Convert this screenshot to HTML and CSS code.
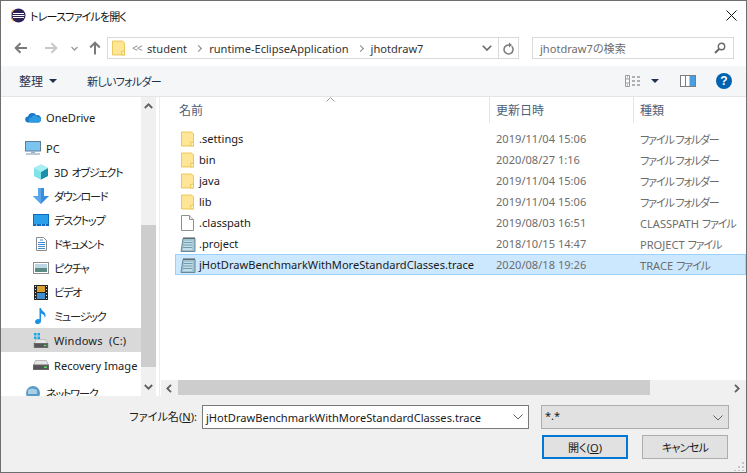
FILE: index.html
```html
<!DOCTYPE html>
<html lang="ja">
<head>
  <meta charset="UTF-8" />
  <title>トレースファイルを開く</title>
  <link rel="stylesheet" href="styles.css">
</head>
<body>
  <svg class="defs" width="0" height="0">
    <symbol id="folder" viewBox="0 0 14 16">
      <path d="M.5.5h11l2 2v13H.5z" fill="#ffe696" stroke="#e8c34f"/>
      <path d="M10.5 15.5v-4h3v4z" fill="#fff3c4" stroke="#e8c34f"/>
    </symbol>
    <symbol id="notepad" viewBox="0 0 16 16">
      <path d="M3 2.500h12v13H1z" fill="#9cc4d4" stroke="#6a8894"/>
      <path d="M4 5h9l-1 9H3z" fill="#c4dde6"/>
      <path d="M3.500 6.500h9M3.200 9h9M3 11.500h9" stroke="#6f9db0"/>
      <path d="M4 1v2M6 1v2M8 1v2M10 1v2M12 1v2M14 1v2" stroke="#555"/>
    </symbol>
    <symbol id="drive" viewBox="0 0 16 10">
      <path d="M2.500 .5h11l2 5H.5z" fill="#e6e6e6" stroke="#b9b9b9"/>
      <rect x=".5" y="5" width="15" height="4.500" fill="#555" stroke="#666"/>
      <rect x="11" y="6.500" width="3" height="1.500" fill="#5fd65f"/>
    </symbol>
  </svg>

  <div class="dialog">
    <!-- Title bar -->
    <div class="titlebar">
      <svg class="app-icon" width="15" height="15" viewBox="0 0 15 15">
        <circle cx="7.500" cy="7.500" r="7" fill="#2c2255"/>
        <path d="M4 .9A7 7 0 0 0 4 14.100 8 8 0 0 1 4 .9z" fill="#f7941e"/>
        <path d="M2 5.500h11M1.500 7.500h12M2 9.500h11" stroke="#fff" stroke-width="1"/>
      </svg>
      <span class="title">トレースファイルを開く</span>
      <svg class="close" width="11" height="11" viewBox="0 0 11 11">
        <path d="M.5.5l10 10M10.500.5l-10 10" stroke="#111" fill="none"/>
      </svg>
    </div>

    <!-- Back / forward and address -->
    <div class="navbar">
      <div class="nav-buttons">
        <svg width="14" height="12" viewBox="0 0 14 12"><path d="M13 6H2M6.500 1.200L1.700 6l4.800 4.800" stroke="#7a7a7a" stroke-width="2" fill="none"/></svg>
        <svg class="nav-fwd" width="14" height="12" viewBox="0 0 14 12"><path d="M1 6h11M7.500 1.200L12.300 6l-4.800 4.800" stroke="#c8c8c8" stroke-width="2" fill="none"/></svg>
        <svg class="nav-down" width="7" height="5" viewBox="0 0 7 5"><path d="M.5 1l3 3 3-3" stroke="#9a9a9a" stroke-width="1.300" fill="none"/></svg>
        <svg class="nav-up" width="12" height="14" viewBox="0 0 12 14"><path d="M6 13.500V2M1.200 6.500L6 1.700l4.800 4.800" stroke="#7a7a7a" stroke-width="2" fill="none"/></svg>
      </div>
      <div class="address">
        <svg class="address-folder" width="13" height="16"><use href="#folder"/></svg>
        <span class="crumb-more">&lt;&lt;</span>
        <span class="crumb">student</span>
        <span class="crumb-sep"></span>
        <span class="crumb">runtime-EclipseApplication</span>
        <span class="crumb-sep"></span>
        <span class="crumb">jhotdraw7</span>
        <svg class="address-drop" width="10" height="6" viewBox="0 0 10 6"><path d="M.8.8L5 5l4.200-4.200" stroke="#666" stroke-width="1.600" fill="none"/></svg>
        <div class="refresh">
          <svg width="11" height="13" viewBox="0 0 11 13"><path d="M8.700 4.300A4.500 4.500 0 1 1 5.500 3H7" stroke="#7a7a7a" stroke-width="1.500" fill="none"/><path d="M6 .4l3 2.600-3 2.600z" fill="#7a7a7a"/></svg>
        </div>
      </div>
      <div class="search">
        <span>jhotdraw7の検索</span>
        <svg width="12" height="12" viewBox="0 0 12 12"><circle cx="7.500" cy="4.500" r="3.200" stroke="#666" stroke-width="1.400" fill="none"/><path d="M5 7L1 11" stroke="#666" stroke-width="2"/></svg>
      </div>
    </div>

    <!-- Command bar -->
    <div class="toolbar">
      <span class="tool">整理<i class="caret"></i></span>
      <span class="tool tool-new">新しいフォルダー</span>
      <div class="toolbar-right">
        <svg class="view-icon" width="16" height="12" viewBox="0 0 16 12">
          <path d="M.5.5h4v11h-4zM.5 4h4M.5 8h4" stroke="#9a9a9a" fill="#fff"/>
          <path d="M2 2h1" stroke="#3f7fbf"/><path d="M2 10h1" stroke="#d04a3c"/>
          <path d="M7 2h3M12 2h3M7 6h3M12 6h3M7 10h3M12 10h3" stroke="#6d6d6d"/>
        </svg>
        <i class="caret caret-view"></i>
        <svg class="pane-icon" width="16" height="12" viewBox="0 0 16 12">
          <rect x=".5" y=".5" width="15" height="11" fill="#fff" stroke="#7d7d7d"/>
          <path d="M5.500 1v10" stroke="#7d7d7d"/>
          <rect x="9.500" y="1" width="5.500" height="10" fill="#4a9ee0"/>
        </svg>
        <span class="help">?</span>
      </div>
    </div>

    <div class="main">
      <!-- Navigation pane -->
      <div class="sidebar">
        <div class="tree">
          <div class="tree-item tree-onedrive">
            <svg width="16" height="11" viewBox="0 0 16 11"><path d="M3.500 10.500a3 3 0 0 1-.5-6 4.500 4.500 0 0 1 8.300-1.300A3.700 3.700 0 0 1 15.800 8c0 1.500-1 2.500-2.300 2.500z" fill="#1b78c8"/><path d="M6 10.500a2.500 2.500 0 0 1 .2-5 3.500 3.500 0 0 1 6.300-.5 2.800 2.800 0 0 1 3.300 3.500c-.3 1.200-1.200 2-2.300 2z" fill="#2c9be2"/></svg>
            <span>OneDrive</span>
          </div>
          <div class="tree-item tree-pc">
            <svg width="16" height="14" viewBox="0 0 16 14"><rect x=".5" y=".5" width="15" height="9.500" fill="#7cc4f0" stroke="#5f7f96"/><path d="M6 10.500h4v1.500H6z" fill="#9db1bf"/><path d="M1 13h14" stroke="#a9b8c4" stroke-width="1.500"/></svg>
            <span>PC</span>
          </div>
          <div class="tree-item tree-child">
            <svg width="16" height="16" viewBox="0 0 16 16"><path d="M8 .5L15 4v8l-7 3.500L1 12V4z" fill="#6adbe4"/><path d="M8 8v7.500L1 12V4z" fill="#7fe3ea"/><path d="M8 8l7-4v8l-7 3.500z" fill="#1b8fa8"/><path d="M8 .5L15 4 8 8 1 4z" fill="#a8eef2"/></svg>
            <span>3D <em class="kana">オブジェクト</em></span>
          </div>
          <div class="tree-item tree-child">
            <svg width="16" height="16" viewBox="0 0 16 16"><path d="M5 0h6v8h5l-8 8-8-8h5z" fill="#3a8ee0"/><path d="M5 0h3v16L0 8h5z" fill="#5aa6ea"/></svg>
            <span class="kana">ダウンロード</span>
          </div>
          <div class="tree-item tree-child">
            <svg width="16" height="12" viewBox="0 0 16 12"><rect width="16" height="12" fill="#0f6cbd"/><rect x="1" y="1" width="14" height="9" fill="#2ba0ea"/><path d="M3 11h1M8 11h1M12 11h1" stroke="#fff"/></svg>
            <span class="kana">デスクトップ</span>
          </div>
          <div class="tree-item tree-child">
            <svg class="icon-doc" width="11" height="14" viewBox="0 0 11 14"><path d="M.5.5h7l3 3v10H.5z" fill="#fff" stroke="#8a8a8a"/><path d="M4 3h3M2 5.500h7M2 7.500h7M2 9.500h7M2 11.500h7" stroke="#3f8fd0"/></svg>
            <span class="kana">ドキュメント</span>
          </div>
          <div class="tree-item tree-child">
            <svg width="16" height="12" viewBox="0 0 16 12"><rect x=".5" y=".5" width="15" height="11" fill="#fff" stroke="#8e8e8e"/><rect x="2" y="2" width="12" height="4" fill="#bcd6e6"/><rect x="2" y="6" width="12" height="4" fill="#5c8a84"/></svg>
            <span class="kana">ピクチャ</span>
          </div>
          <div class="tree-item tree-child">
            <svg class="icon-video" width="14" height="15" viewBox="0 0 14 15"><rect width="14" height="15" fill="#262626"/><rect x="3" y="1" width="8" height="6" fill="#d9a032"/><rect x="3" y="8" width="8" height="6" fill="#3f8fd0"/><path d="M1 1.500h1M1 4.500h1M1 7.500h1M1 10.500h1M1 13.500h1M12 1.500h1M12 4.500h1M12 7.500h1M12 10.500h1M12 13.500h1" stroke="#ddd"/></svg>
            <span class="kana">ビデオ</span>
          </div>
          <div class="tree-item tree-child">
            <svg class="icon-music" width="11" height="16" viewBox="0 0 11 16"><path d="M4.500 0H6c.3 3 4.500 3.500 4.500 7.500 0 1-.3 1.800-.8 2.500.2-2.500-1.500-4-3.700-4.500V13c0 1.800-1.500 3-3.200 3C1.300 16 0 15.200 0 13.700s1.600-2.700 3.300-2.700c.5 0 .9.100 1.200.2z" fill="#1a90e6"/></svg>
            <span class="kana">ミュージック</span>
          </div>
          <div class="tree-item tree-child is-current">
            <svg width="16" height="16" viewBox="0 0 16 16"><path d="M1 1h2.500v2.500H1zM4.500 1H7v2.500H4.500zM1 4.500h2.500V7H1zM4.500 4.500H7V7H4.500z" fill="#17a5e6"/><use href="#drive" y="7" width="16" height="9"/></svg>
            <span class="drive-label">Windows&nbsp;&nbsp;(C:)</span>
          </div>
          <div class="tree-item tree-child tree-recovery">
            <svg width="16" height="10" viewBox="0 0 16 10"><use href="#drive"/></svg>
            <span>Recovery Image</span>
          </div>
          <div class="tree-item tree-network">
            <svg width="16" height="16" viewBox="0 0 16 16"><circle cx="8" cy="8" r="7" fill="#5b9bc8"/><path d="M3 5c3-2 6-2 9 0v4H3z" fill="#a9cfe6"/></svg>
            <span class="kana">ネットワーク</span>
          </div>
        </div>
        <div class="scroll-v">
          <svg class="arrow" width="9" height="6" viewBox="0 0 9 6"><path d="M.8 5L4.500 1.300 8.200 5" stroke="#606060" stroke-width="1.800" fill="none"/></svg>
          <div class="scroll-v-track"><div class="scroll-v-thumb"></div></div>
          <svg class="arrow" width="9" height="6" viewBox="0 0 9 6"><path d="M.8 1L4.500 4.700 8.200 1" stroke="#606060" stroke-width="1.800" fill="none"/></svg>
        </div>
      </div>

      <!-- File list -->
      <div class="files">
        <div class="list">
          <svg class="sort-arrow" width="9" height="5" viewBox="0 0 9 5"><path d="M.5 4.500l4-4 4 4" stroke="#9a9a9a" fill="none"/></svg>
          <div class="col-head">
            <span class="col col-name">名前</span>
            <span class="col col-date">更新日時</span>
            <span class="col col-type">種類</span>
          </div>
          <div class="row"><span class="col-name"><svg width="13" height="16"><use href="#folder"/></svg><b>.settings</b></span><span class="col-date">2019/11/04 15:06</span><span class="col-type"><em class="kana">ファイル フォルダー</em></span></div>
          <div class="row"><span class="col-name"><svg width="13" height="16"><use href="#folder"/></svg><b>bin</b></span><span class="col-date">2020/08/27 1:16</span><span class="col-type"><em class="kana">ファイル フォルダー</em></span></div>
          <div class="row"><span class="col-name"><svg width="13" height="16"><use href="#folder"/></svg><b>java</b></span><span class="col-date">2019/11/04 15:06</span><span class="col-type"><em class="kana">ファイル フォルダー</em></span></div>
          <div class="row"><span class="col-name"><svg width="13" height="16"><use href="#folder"/></svg><b>lib</b></span><span class="col-date">2019/11/04 15:06</span><span class="col-type"><em class="kana">ファイル フォルダー</em></span></div>
          <div class="row"><span class="col-name"><svg width="13" height="16" viewBox="0 0 13 16"><path d="M.5.5h8l4 4v11H.5z" fill="#fff" stroke="#8f8f8f"/><path d="M8.500.5v4h4" fill="#eee" stroke="#8f8f8f"/></svg><b>.classpath</b></span><span class="col-date">2019/08/03 16:51</span><span class="col-type">CLASSPATH <em class="kana">ファイル</em></span></div>
          <div class="row"><span class="col-name"><svg class="icon-note" width="16" height="16"><use href="#notepad"/></svg><b>.project</b></span><span class="col-date">2018/10/15 14:47</span><span class="col-type">PROJECT <em class="kana">ファイル</em></span></div>
          <div class="row is-selected"><span class="col-name"><svg class="icon-note" width="16" height="16"><use href="#notepad"/></svg><b>jHotDrawBenchmarkWithMoreStandardClasses.trace</b></span><span class="col-date">2020/08/18 19:26</span><span class="col-type">TRACE <em class="kana">ファイル</em></span></div>
        </div>
        <div class="scroll-h">
          <svg class="arrow" width="6" height="9" viewBox="0 0 6 9"><path d="M5 .8L1.300 4.500 5 8.200" stroke="#606060" stroke-width="1.800" fill="none"/></svg>
          <div class="scroll-h-track"><div class="scroll-h-thumb"></div></div>
          <svg class="arrow" width="6" height="9" viewBox="0 0 6 9"><path d="M1 .8L4.700 4.500 1 8.200" stroke="#606060" stroke-width="1.800" fill="none"/></svg>
        </div>
      </div>
    </div>

    <!-- File name, filter and buttons -->
    <div class="footer">
      <div class="footer-row">
        <label class="name-label">ファイル名(<u>N</u>):</label>
        <div class="combo combo-name">
          <span>jHotDrawBenchmarkWithMoreStandardClasses.trace</span>
          <svg width="10" height="6" viewBox="0 0 10 6"><path d="M.5.5L5 5 9.500.5" stroke="#606060" fill="none"/></svg>
        </div>
        <div class="combo combo-filter">
          <span>*.*</span>
          <svg width="10" height="6" viewBox="0 0 10 6"><path d="M.5.5L5 5 9.500.5" stroke="#606060" fill="none"/></svg>
        </div>
      </div>
      <div class="footer-buttons">
        <button class="btn btn-default">開く(<u>O</u>)</button>
        <button class="btn"><em class="kana-btn">キャンセル</em></button>
      </div>
      <svg class="grip" width="10" height="10" viewBox="0 0 10 10"><path d="M8 1h2v2H8zM4 5h2v2H4zM8 5h2v2H8zM0 9h2v1H0zM4 9h2v1H4zM8 9h2v1H8z" fill="#c4c4c4"/></svg>
    </div>
  </div>
</body>
</html>
```

FILE: styles.css
```css
* {
  box-sizing: border-box;
}
html, body {
  margin: 0;
  padding: 0;
}
body {
  font-family: "Noto Sans", "Noto Sans CJK JP", sans-serif;
  font-size: 11.1px;
  font-feature-settings: "palt";
  color: #1a1a1a;
  background: #fff;
}
svg {
  display: block;
  flex: none;
}
em {
  font-style: normal;
}
.kana {
  letter-spacing: -1.2px;
}
.kana-btn {
  letter-spacing: -.8px;
}
.defs {
  position: absolute;
}
.dialog {
  width: 747px;
  height: 473px;
  border: 1px solid #6e6e6e;
  display: flex;
  flex-direction: column;
  overflow: hidden;
  background: #fff;
}

/* Title bar */
.titlebar {
  height: 29px;
  flex: none;
  display: flex;
  align-items: center;
  padding: 0 10px;
}
.title {
  margin-left: 4px;
  color: #111;
  letter-spacing: -.9px;
}
.close {
  margin-left: auto;
  margin-right: -1px;
}

/* Navigation row */
.navbar {
  height: 36px;
  flex: none;
  display: flex;
  padding-top: 7px;
  align-items: flex-start;
}
.nav-buttons {
  width: 106px;
  height: 22px;
  display: flex;
  align-items: center;
  padding-left: 13px;
}
.nav-fwd {
  margin-left: 16px;
}
.nav-down {
  margin-left: 13px;
}
.nav-up {
  margin-left: 11px;
}
.address {
  width: 412px;
  height: 22px;
  border: 1px solid #d9d9d9;
  display: flex;
  align-items: center;
  color: #333;
}
.address-folder {
  margin-left: 4px;
}
.crumb-more {
  margin-left: 7px;
  color: #888;
  font-size: 10px;
  letter-spacing: -1px;
  width: 7px;
}
.crumb {
  margin-left: 8px;
}
.crumb-sep {
  width: 5px;
  height: 5px;
  margin-left: 9px;
  border-top: 1.500px solid #888;
  border-right: 1.500px solid #888;
  transform: rotate(45deg);
}
.address-drop {
  margin-left: auto;
  margin-right: 6px;
}
.refresh {
  width: 20px;
  height: 20px;
  border-left: 1px solid #d9d9d9;
  display: flex;
  align-items: center;
  justify-content: center;
}
.search {
  width: 202px;
  height: 22px;
  margin-left: 13px;
  border: 1px solid #d9d9d9;
  display: flex;
  align-items: center;
  justify-content: space-between;
  padding: 0 7px;
  color: #6d6d6d;
}

/* Command bar */
.toolbar {
  height: 31px;
  flex: none;
  background: #f5f6f7;
  border-bottom: 1px solid #e5e5e5;
  display: flex;
  align-items: center;
  padding-left: 18px;
  color: #1e3250;
}
.tool {
  display: flex;
  align-items: center;
  font-size: 12px;
}
.tool-new {
  margin-left: 30px;
  font-size: 11.1px;
  letter-spacing: -.8px;
}
.caret {
  width: 0;
  height: 0;
  margin-left: 6px;
  border-left: 4px solid transparent;
  border-right: 4px solid transparent;
  border-top: 4px solid #1e3250;
}
.toolbar-right {
  margin-left: auto;
  display: flex;
  align-items: center;
  padding-right: 14px;
}
.caret-view {
  margin-left: 10px;
}
.pane-icon {
  margin-left: 21px;
}
.help {
  width: 16px;
  height: 16px;
  margin-left: 20px;
  border-radius: 50%;
  background: #0063b1;
  color: #fff;
  font-family: "Liberation Sans", sans-serif;
  font-size: 12px;
  font-weight: bold;
  line-height: 16px;
  text-align: center;
}

/* Main area */
.main {
  height: 299px;
  flex: none;
  display: flex;
}
.sidebar {
  width: 159px;
  flex: none;
  display: flex;
  border-right: 1px solid #ececec;
  padding-right: 3px;
}
.tree {
  width: 140px;
  flex: none;
  padding-top: 8px;
  overflow: hidden;
}
.tree-item {
  height: 24px;
  display: flex;
  align-items: center;
  padding-left: 24px;
  white-space: nowrap;
  color: #222;
}
.tree-item span {
  margin-left: 5px;
}
.tree-child {
  padding-left: 32px;
}
.tree-pc {
  margin-top: 7px;
}
.tree-recovery {
  margin-top: 1px;
}
.tree-network {
  margin-top: 4px;
}
.is-current {
  background: #d9d9d9;
}
.drive-label {
  letter-spacing: .2px;
}
.icon-doc {
  margin: 0 2px 0 3px;
}
.icon-video {
  margin: 0 1px;
}
.icon-music {
  margin: 0 3px 0 2px;
}
.scroll-v {
  width: 15px;
  flex: none;
  background: #f0f0f0;
  display: flex;
  flex-direction: column;
  align-items: center;
}
.scroll-v .arrow {
  margin: 6px 0;
}
.scroll-v-track {
  flex: 1;
  width: 100%;
  padding-top: 110px;
}
.scroll-v-thumb {
  height: 142px;
  background: #cdcdcd;
}

/* File list */
.files {
  flex: 1;
  min-width: 0;
  display: flex;
  flex-direction: column;
}
.list {
  flex: 1;
  position: relative;
  overflow: hidden;
}
.sort-arrow {
  position: absolute;
  left: 166px;
  top: 0;
}
.col-head {
  height: 26px;
  display: flex;
  color: #4c607a;
  margin-bottom: 5px;
}
.col-head .col {
  display: flex;
  align-items: center;
  font-size: 12px;
}
.col-head .col-name {
  padding-left: 19px;
}
.col-head .col-date,
.col-head .col-type {
  border-left: 1px solid #e5e5e5;
  padding-left: 6px;
}
.col-name {
  width: 329px;
  flex: none;
}
.col-date {
  width: 144px;
  flex: none;
}
.col-type {
  flex: 1;
}
.row {
  height: 21px;
  margin-left: 15px;
  display: flex;
  align-items: center;
  white-space: nowrap;
  color: #6d6d6d;
  border: 1px solid transparent;
}
.row .col-name {
  width: 314px;
  padding-left: 5px;
  display: flex;
  align-items: center;
  color: #1a1a1a;
}
.row b {
  font-weight: normal;
  margin-left: 5px;
}
.row .col-date {
  width: 144px;
  padding-left: 6px;
}
.row .col-type {
  padding-left: 6px;
  overflow: hidden;
}
.icon-note {
  margin-left: -1px;
  margin-right: -2px;
}
.is-selected {
  background: #cce8ff;
  border-color: #99d1ff;
}
.scroll-h {
  height: 16px;
  flex: none;
  margin-left: 1px;
  background: #f0f0f0;
  display: flex;
  align-items: center;
}
.scroll-h .arrow {
  margin: 0 6px 0 5px;
}
.scroll-h-track {
  flex: 1;
  height: 100%;
}
.scroll-h-thumb {
  width: 472px;
  height: 15px;
  background: #cdcdcd;
}

/* Footer */
.footer {
  flex: 1;
  background: #f0f0f0;
  padding-top: 9px;
  position: relative;
}
.footer-row {
  display: flex;
}
.name-label {
  width: 196px;
  height: 23px;
  line-height: 23px;
  text-align: right;
  color: #1a1a1a;
}
.combo {
  height: 24px;
  display: flex;
  align-items: center;
  justify-content: space-between;
  padding: 0 5px 0 3px;
  white-space: nowrap;
}
.combo-name {
  width: 327px;
  margin-left: 5px;
  background: #fff;
  border: 1px solid #7a7a7a;
}
.combo-filter {
  width: 188px;
  margin-left: 12px;
  background: #e1e1e1;
  border: 1px solid #adadad;
  align-items: flex-start;
  padding-top: 2px;
}
.combo-filter svg {
  margin-top: 7px;
}
.footer-buttons {
  display: flex;
  margin-top: 6px;
  padding-left: 541px;
  gap: 14px;
}
.btn {
  width: 86px;
  height: 24px;
  padding: 0;
  font: inherit;
  font-feature-settings: "palt";
  color: #1a1a1a;
  background: #e1e1e1;
  border: 1px solid #adadad;
}
.btn-default {
  border: 2px solid #0078d7;
}
.grip {
  position: absolute;
  right: 2px;
  bottom: 1px;
}
```
